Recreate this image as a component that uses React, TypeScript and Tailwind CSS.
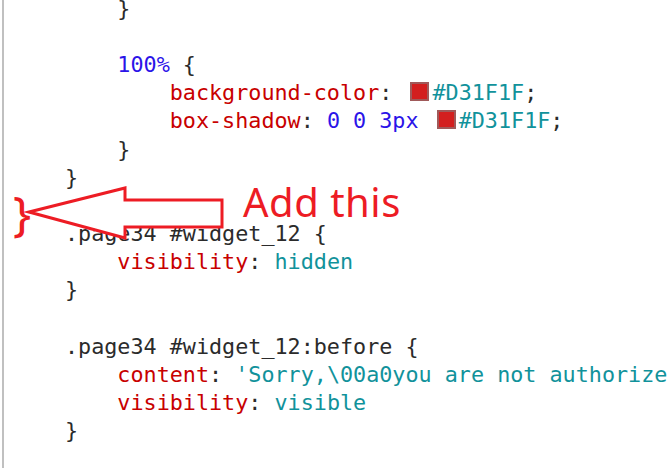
const RED = "text-[#c80000]";
const TEAL = "text-[#11929b]";
const BLUE = "text-[#2b14e8]";

const Swatch = () => (
  <span className="inline-block w-[19px] h-[19px] ml-[5px] mr-[3px] align-[-1px] bg-[#D31F1F] border-2 border-[#a05a5a]" />
);

const Line = ({ children }: { children?: React.ReactNode }) => (
  <div className="h-[28.2px] leading-[28.2px] whitespace-pre">{children}</div>
);

const App = () => {
  return (
    <div className="relative w-[667px] h-[473px] overflow-hidden bg-white">
      <div className="ml-[2px] h-full border-l-2 border-[#c0c0c0] pl-[8.6px]">
        <div className="-mt-[5.4px] font-['DejaVu_Sans_Mono',monospace] text-[21.75px] text-[#2b2b2b]">
          <Line>{"        }"}</Line>
          <Line />
          <Line>
            {"        "}
            <span className={BLUE}>100%</span>
            {" {"}
          </Line>
          <Line>
            {"            "}
            <span className={RED}>background-color</span>
            {": "}
            <Swatch />
            <span className={TEAL}>#D31F1F</span>;
          </Line>
          <Line>
            {"            "}
            <span className={RED}>box-shadow</span>
            {": "}
            <span className={BLUE}>0 0 3px</span>
            {" "}
            <Swatch />
            <span className={TEAL}>#D31F1F</span>;
          </Line>
          <Line>{"        }"}</Line>
          <Line>{"    }"}</Line>
          <Line />
          <Line>{"    .page34 #widget_12 {"}</Line>
          <Line>
            {"        "}
            <span className={RED}>visibility</span>
            {": "}
            <span className={TEAL}>hidden</span>
          </Line>
          <Line>{"    }"}</Line>
          <Line />
          <Line>{"    .page34 #widget_12:before {"}</Line>
          <Line>
            {"        "}
            <span className={RED}>content</span>
            {": "}
            <span className={TEAL}>'Sorry,\00a0you are not authorized to view this content.'</span>
          </Line>
          <Line>
            {"        "}
            <span className={RED}>visibility</span>
            {": "}
            <span className={TEAL}>visible</span>
          </Line>
          <Line>{"    }"}</Line>
        </div>
      </div>

      {/* annotation */}
      <svg className="absolute left-0 top-0 pointer-events-none" width="667" height="473">
        <polygon
          points="29,212 125,188 125,200 222,200 222,227 125,227 125,238"
          fill="white"
          stroke="#ED1C24"
          strokeWidth="3"
          strokeLinejoin="miter"
        />
      </svg>
      <span className="absolute left-[13px] top-[189px] font-['Noto_Sans',sans-serif] text-[48px] leading-[48px] text-[#ED1C24]">
        {"}"}
      </span>
      <span className="absolute left-[243px] top-[181.5px] font-['Noto_Sans',sans-serif] text-[40px] leading-[40px] tracking-[0.5px] text-[#ED1C24] whitespace-nowrap">
        Add this
      </span>
    </div>
  );
};

export default App;
